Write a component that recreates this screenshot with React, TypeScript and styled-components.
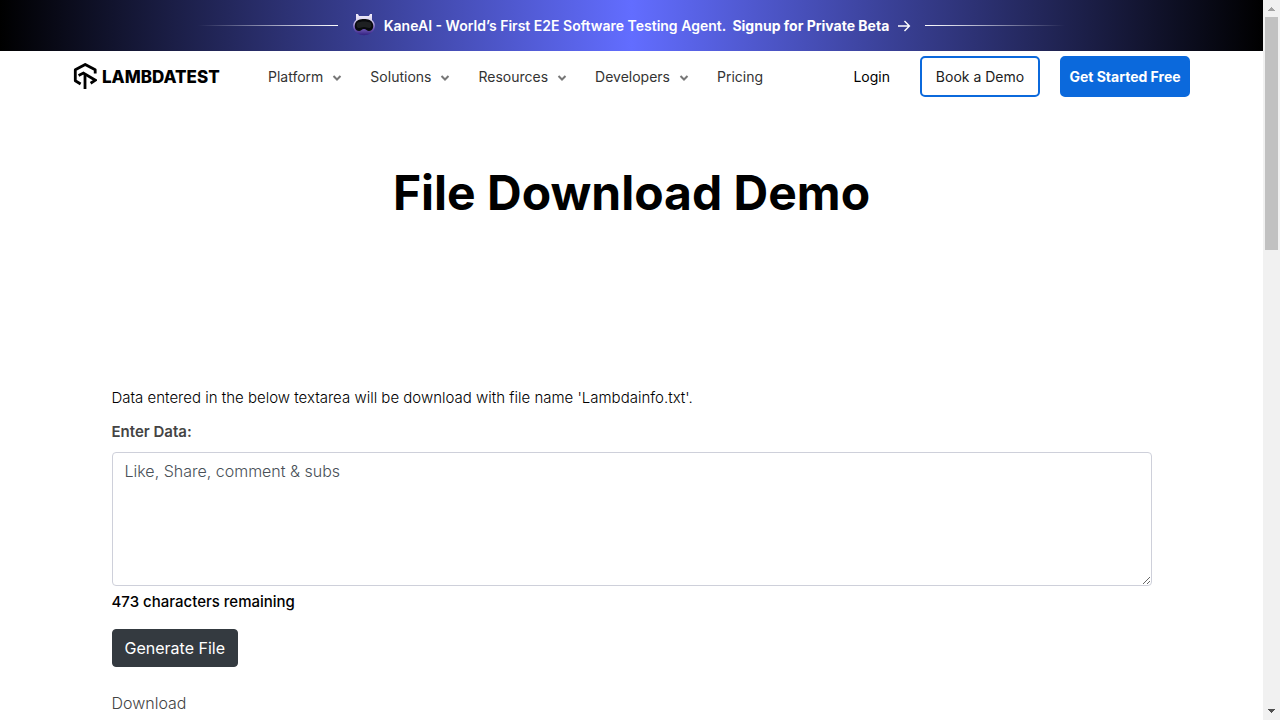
import React, { useState } from "react";
import styled, { createGlobalStyle } from "styled-components";

const GlobalStyle = createGlobalStyle`
  *, *::before, *::after { box-sizing: border-box; }
  html { scrollbar-width: none; }
  body {
    margin: 0;
    padding-right: 17px;
    background: #fff;
    color: #000;
    font-family: Inter, "Liberation Sans", sans-serif;
    font-size: 16px;
    line-height: 24px;
  }
  h1, p { margin: 0; }
  a { color: inherit; text-decoration: none; }
`;

const Banner = styled.aside`
  display: flex;
  align-items: center;
  justify-content: center;
  height: 51px;
  color: #fff;
  background: linear-gradient(90deg, #000, #626dff 50%, #000);
`;

const Rule = styled.span<{ $to: "left" | "right" }>`
  width: 140px;
  height: 1px;
  background: linear-gradient(to ${(p) => p.$to}, #fff, transparent);
`;

const BannerLink = styled.a`
  display: flex;
  align-items: center;
  gap: 8px;
  margin: 0 14px;
  font-size: 14px;
  font-weight: 600;
  line-height: 21px;
  white-space: nowrap;

  strong {
    margin-left: 3px;
    font-weight: 700;
  }
`;

const Header = styled.header`
  display: flex;
  align-items: center;
  height: 51px;
  padding: 0 73px;
`;

const Logo = styled.a`
  display: flex;
  align-items: center;
  gap: 5px;
  width: 195px;
  font-size: 17px;
  font-weight: 800;
  line-height: 24px;
`;

const Menu = styled.nav`
  display: flex;
  flex: 1;
  gap: 28px;
`;

const MenuButton = styled.button`
  display: flex;
  align-items: center;
  gap: 9px;
  padding: 0;
  border: 0;
  background: none;
  color: #333;
  font: inherit;
  font-size: 14px;
`;

const MenuLink = styled.a`
  color: #333;
  font-size: 14px;
`;

const Actions = styled.div`
  display: flex;
  align-items: center;
  font-size: 14px;
`;

const Login = styled.a`
  margin-right: 30px;
`;

const Action = styled.a<{ $filled?: boolean }>`
  display: flex;
  align-items: center;
  justify-content: center;
  width: ${(p) => (p.$filled ? 130 : 120)}px;
  height: 41px;
  margin-left: ${(p) => (p.$filled ? 20 : 0)}px;
  border: 2px solid #0b69dc;
  border-radius: 5px;
  background: ${(p) => (p.$filled ? "#0b69dc" : "#fff")};
  color: ${(p) => (p.$filled ? "#fff" : "#212121")};
  font-weight: ${(p) => (p.$filled ? 700 : 400)};
  white-space: nowrap;
`;

const Hero = styled.section`
  padding: 62px 16px 60px;
  text-align: center;
`;

const Title = styled.h1`
  font-size: 48px;
  font-weight: 700;
  line-height: 58px;
`;

const Content = styled.main`
  max-width: 1072px;
  margin: 0 auto;
  padding: 104px 16px 4px;
`;

const Intro = styled.p`
  margin-bottom: 10px;
  font-size: 15px;
  font-weight: 300;
`;

const Label = styled.label`
  display: block;
  margin-bottom: 8px;
  color: #444;
  font-size: 15px;
  font-weight: 600;
`;

const DataInput = styled.textarea`
  display: block;
  width: 100%;
  height: 134px;
  padding: 6px 12px;
  border: 1px solid #ced0da;
  border-radius: 4px;
  outline: 0;
  color: #495057;
  font: inherit;
  font-weight: 300;
`;

const Remaining = styled.p`
  margin: 4px 0 15px;
  font-size: 15px;
  font-weight: 500;
`;

const Generate = styled.button`
  display: block;
  height: 38px;
  margin-bottom: 24px;
  padding: 0 12px;
  border: 1px solid #343a40;
  border-radius: 4px;
  background: #343a40;
  color: #fff;
  font: inherit;
`;

const Download = styled.a`
  color: #444;
  font-weight: 300;
`;

const ScrollTrack = styled.div`
  position: fixed;
  top: 0;
  right: 0;
  bottom: 0;
  display: flex;
  flex-direction: column;
  align-items: center;
  width: 17px;
  background: #f1f1f1;
`;

const ScrollThumb = styled.div`
  width: 13px;
  height: 233px;
  margin-bottom: auto;
  background: #c1c1c1;
`;

const Robot = () => (
  <svg width="24" height="24" viewBox="0 0 24 24" aria-hidden="true">
    <defs>
      <linearGradient id="shell" x1="0" y1="0" x2="0" y2="1">
        <stop offset="0" stopColor="#f4f0fb" />
        <stop offset="0.3" stopColor="#d9d2ee" />
        <stop offset="0.65" stopColor="#7a62c0" />
        <stop offset="1" stopColor="#30207e" />
      </linearGradient>
    </defs>
    <path d="M4 6L4 0Q6 -1 7 2H17Q18 -1 20 0V6C24 9 24 16 19 19C15 22 9 22 5 19C0 16 0 9 4 6Z" fill="url(#shell)" />
    <path d="M3 10C4 6 8 5 12 5S20 6 21 10C22 14 20 17 17 17C15 17 14 15 12 15S9 17 7 17C4 17 2 14 3 10Z" fill="#090a0d" />
    <path d="M5 9C8 7 16 7 19 9C20 12 19 14 17 14C15 14 14 13 12 13S9 14 7 14C5 14 4 12 5 9Z" fill="#1e2022" />
  </svg>
);

const Arrow = () => (
  <svg width="14" height="14" viewBox="0 0 14 14" fill="none" stroke="#fff" strokeWidth="1.4" aria-hidden="true">
    <path d="M1 7H12M7.5 2L12.4 7L7.5 12" />
  </svg>
);

const Chevron = () => (
  <svg width="10" height="10" viewBox="0 0 10 10" fill="none" stroke="#777" strokeWidth="2" aria-hidden="true">
    <path d="M1.5 4L5 7.5L8.5 4" />
  </svg>
);

const LogoMark = () => (
  <svg width="24" height="28" viewBox="0 0 24 28" fill="none" stroke="#000" strokeWidth="2.8" aria-hidden="true">
    <path d="M7.6 21L2.3 17.8V6.8L12.2 1.4L22.2 6.8V10.6" strokeLinejoin="round" />
    <path d="M5.6 12.4L10.4 10L22.4 17.2L17.6 20.2" />
    <path d="M12 11V26" />
  </svg>
);

const ScrollArrow = ({ down }: { down?: boolean }) => (
  <svg width="17" height="17" viewBox="0 0 17 17" shapeRendering="crispEdges" aria-hidden="true">
    <path d={down ? "M5 6H12L8.5 10Z" : "M5 11H12L8.5 7Z"} fill={down ? "#505050" : "#a3a3a3"} />
  </svg>
);

const menus = ["Platform", "Solutions", "Resources", "Developers"];
const LIMIT = 500;

export default function App() {
  const [text, setText] = useState("Like, Share, comment & subs");

  return (
    <>
      <GlobalStyle />
      <Banner>
        <Rule $to="left" />
        <BannerLink href="#beta">
          <Robot />
          <span>KaneAI - World’s First E2E Software Testing Agent. <strong>Signup for Private Beta</strong></span>
          <Arrow />
        </BannerLink>
        <Rule $to="right" />
      </Banner>
      <Header>
        <Logo href="#home"><LogoMark />LAMBDATEST</Logo>
        <Menu>
          {menus.map((name) => (
            <MenuButton key={name} type="button">{name}<Chevron /></MenuButton>
          ))}
          <MenuLink href="#pricing">Pricing</MenuLink>
        </Menu>
        <Actions>
          <Login href="#login">Login</Login>
          <Action href="#demo">Book a Demo</Action>
          <Action href="#register" $filled>Get Started Free</Action>
        </Actions>
      </Header>
      <Hero>
        <Title>File Download Demo</Title>
      </Hero>
      <Content>
        <Intro>Data entered in the below textarea will be download with file name 'Lambdainfo.txt'.</Intro>
        <Label htmlFor="data">Enter Data:</Label>
        <DataInput id="data" maxLength={LIMIT} value={text} onChange={(e) => setText(e.target.value)} />
        <Remaining>{LIMIT - text.length} characters remaining</Remaining>
        <Generate type="button">Generate File</Generate>
        <Download href="#download">Download</Download>
      </Content>
      <ScrollTrack aria-hidden="true">
        <ScrollArrow />
        <ScrollThumb />
        <ScrollArrow down />
      </ScrollTrack>
    </>
  );
}
